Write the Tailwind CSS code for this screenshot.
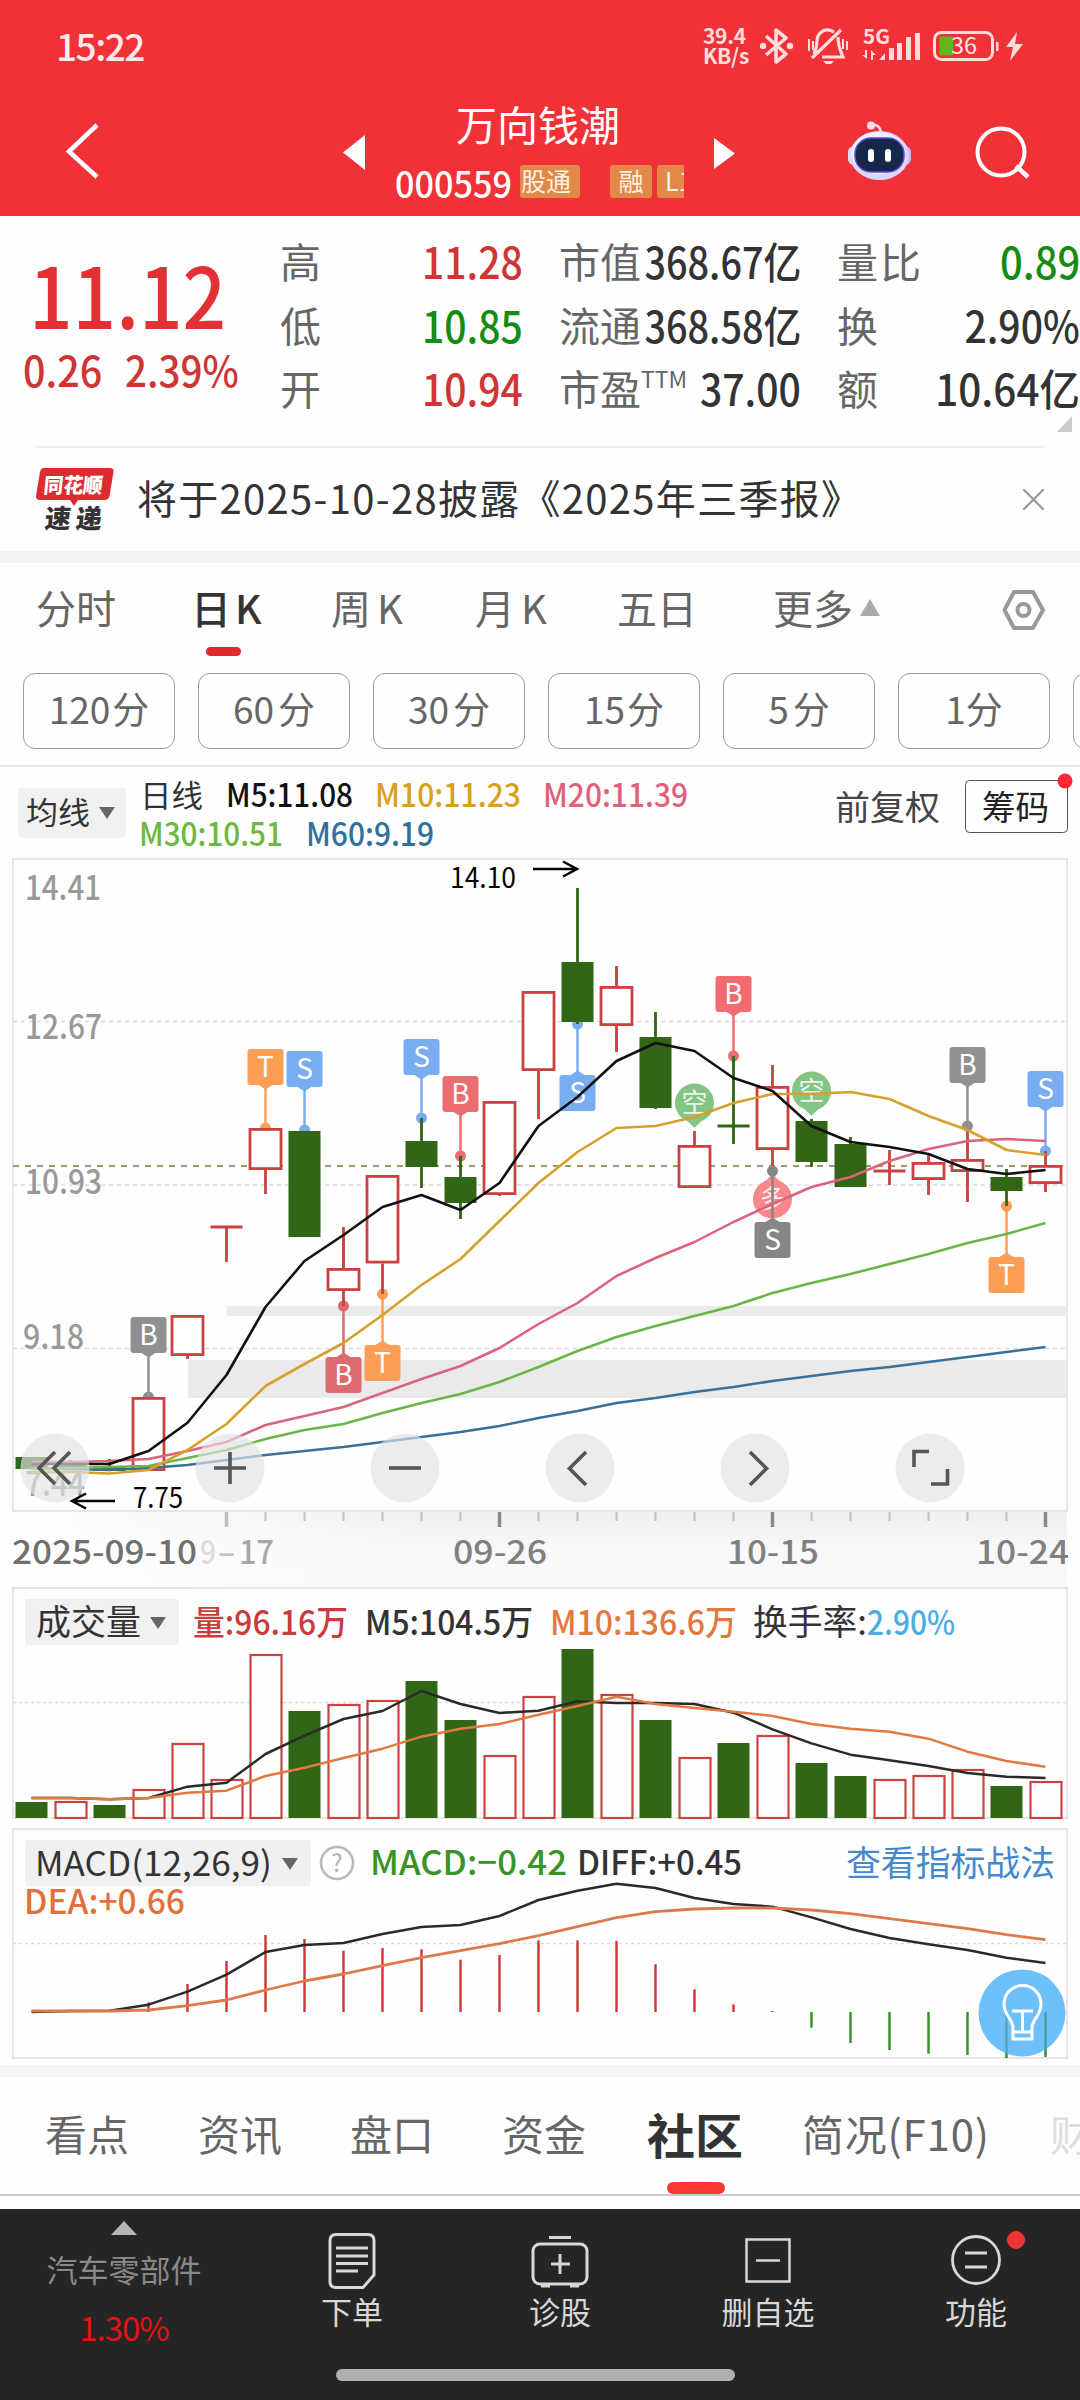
<!DOCTYPE html>
<html lang="zh-CN">
<head>
<meta charset="utf-8">
<title>万向钱潮 000559</title>
<script src="https://cdn.jsdelivr.net/npm/@tailwindcss/browser@4"></script>
</head>
<body class="w-[1080px] h-[2400px] overflow-hidden bg-[#fefefe] font-['Noto_Sans_CJK_SC',sans-serif] text-[#333] flex flex-col whitespace-nowrap">

<!-- Header -->
<header class="h-[216px] shrink-0 bg-[#f03238] text-white flex flex-col">
  <div class="h-[90px] flex items-center pl-[56px]">
    <span class="text-[37px] leading-[40px] font-medium tracking-[-1.5px] w-[647px] text-[#ffe9e9]">15:22</span>
    <div class="flex flex-col text-[21px] leading-[20px] font-bold tracking-[-0.3px] text-[#ffdcdc] w-[57px]"><span>39.4</span><span>KB/s</span></div>
    <svg class="w-[270px] h-[50px]" viewBox="760 20 270 50" fill="none" stroke="#ffdcdc" stroke-width="3.6">
      <path d="M766 36l20 18-10 8V30l10 8-20 17" stroke-linejoin="round"/>
      <circle cx="763" cy="46" r="3.2" fill="#ffdcdc" stroke="none"/><circle cx="790" cy="46" r="3.2" fill="#ffdcdc" stroke="none"/>
      <path d="M812 58L841 30M834 32c-11-6-17 3-17 9 0 7-1 9-3 13M838 37c0 9 2 13 5 20h-21" stroke-width="3.2"/>
      <path d="M823 61h11l-3 3h-5z" fill="#ffdcdc" stroke="none"/>
      <path d="M809 39v12M813 41v9M843 39v10M847 41v9" stroke-width="2"/>
      <g fill="#ffdcdc" stroke="none"><path d="M879 60l6-7v7zM889 48h5v12h-5zM897 43h5v17h-5zM906 37h5v23h-5zM915 33h5v27h-5z"/><path d="M867 50v9l-5-4h3v-5zM871 60V50l5 5h-3v5z"/></g>
      <text x="863" y="43.5" fill="#ffdcdc" stroke="none" font-size="20" font-weight="700" textLength="27" lengthAdjust="spacingAndGlyphs">5G</text>
      <rect x="934.5" y="32.500" width="58" height="27" rx="7" stroke-width="3"/>
      <path d="M941 36.500h12v19h-12a1.500 1.500 0 0 1-1.500-1.500V38a1.500 1.500 0 0 1 1.500-1.500z" fill="#62b51a" stroke="none"/>
      <path d="M996 42h2.500v9h-2.500z" fill="#ffdcdc" stroke="none"/>
      <text x="951" y="54" fill="#ffeaea" stroke="none" font-size="23" textLength="26" lengthAdjust="spacingAndGlyphs">36</text>
      <path d="M1017 32l-11 15h7l-3 14 13-17h-8z" fill="#ffdcdc" stroke="none"/>
    </svg>
  </div>
  <div class="h-[126px] flex">
    <svg class="w-[380px] h-[126px]" viewBox="0 90 380 126"><path d="M97 125L69 151.500 97 177" fill="none" stroke="#fff" stroke-width="4.500"/><path d="M343 152.500L365 135v35z" fill="#fff"/></svg>
    <div class="w-[320px] flex flex-col items-start">
      <div class="pl-[76px] pt-[9px] text-[41px] leading-[48px]">万向钱潮</div>
      <div class="flex items-center pl-[15px] w-[304px] overflow-hidden h-[74px]">
        <span class="text-[36px] leading-[40px] w-[125px] shrink-0"><span class="inline-block origin-left scale-x-[.95] font-medium">000559</span></span>
        <span class="bg-[#e28849] rounded-[3px] w-[60px] shrink-0 h-[33px] text-[25px] leading-[31px] pl-px text-[#fff1e0]">股通</span>
        <span class="bg-[#e28849] rounded-[3px] w-[42px] shrink-0 h-[33px] text-[25px] leading-[31px] ml-[30px] text-center text-[#fff1e0]">融</span>
        <span class="bg-[#e28849] rounded-l-[3px] w-[40px] h-[33px] text-[25px] leading-[31px] ml-[5px] pl-2 shrink-0 text-[#fff1e0]">L1</span>
      </div>
    </div>
    <svg class="w-[380px] h-[126px]" viewBox="700 90 380 126">
      <path d="M735 153.500L714 138v31z" fill="#fff"/>
      <circle cx="871" cy="125.500" r="4" fill="#ffd9e4"/><path d="M871 125c6-1 9 2 10 7" stroke="#ffd9e4" stroke-width="2.500" fill="none"/>
      <rect x="848" y="146" width="12" height="19" rx="6" fill="#e9ddf9"/><rect x="899" y="146" width="12" height="19" rx="6" fill="#c9b9ee"/>
      <ellipse cx="879.500" cy="155.500" rx="29.500" ry="24.500" fill="#dcd6fa"/><ellipse cx="878" cy="153" rx="27" ry="21" fill="#f1effd"/>
      <rect x="855" y="138" width="49" height="34" rx="16" fill="#17274a" stroke="#5a4bd0" stroke-width="1.500"/>
      <rect x="868" y="149" width="6" height="13" rx="3" fill="#fff"/><rect x="885" y="149" width="6" height="13" rx="3" fill="#fff"/>
      <circle cx="1001" cy="152" r="23.500" fill="none" stroke="#fff" stroke-width="4"/><path d="M1016 166l12 11" stroke="#fff" stroke-width="4.500"/>
    </svg>
  </div>
</header>

<!-- Quote -->
<section class="h-[230px] shrink-0 relative flex pt-[13px]">
  <div class="w-[281px] flex flex-col text-[#e23034]">
    <div class="pl-[29px] pt-[20px] text-[84px] leading-[88px]"><span class="inline-block origin-left scale-x-[.91] font-medium">11.12</span></div>
    <div class="flex text-[42px] leading-[48px] pt-[8px] pl-[23px] text-[#cf3535] font-medium"><span class="w-[102px]"><span class="inline-block origin-left scale-x-[.94]">0.26</span></span><span class="inline-block origin-left scale-x-[.92]">2.39%</span></div>
  </div>
  <div class="flex gap-[36px] text-[41px] leading-[63.5px] text-[#666]">
    <div class="w-[243px]">
      <div class="flex justify-between"><span>高</span><span class="text-[43px] origin-right scale-x-[.91] text-[#d03535] font-medium">11.28</span></div>
      <div class="flex justify-between"><span>低</span><span class="text-[43px] origin-right scale-x-[.91] text-[#148c14] font-medium">10.85</span></div>
      <div class="flex justify-between"><span>开</span><span class="text-[43px] origin-right scale-x-[.91] text-[#d03535] font-medium">10.94</span></div>
    </div>
    <div class="w-[242px] flex flex-col">
      <div class="flex justify-between"><span class="w-[88px]">市值</span><span class="w-[154px] flex justify-end"><span class="text-[43px] origin-right scale-x-[.88] text-[#333] font-medium">368.67亿</span></span></div>
      <div class="flex justify-between"><span class="w-[88px]">流通</span><span class="w-[154px] flex justify-end"><span class="text-[43px] origin-right scale-x-[.88] text-[#333] font-medium">368.58亿</span></span></div>
      <div class="flex justify-between"><span class="flex">市盈<span class="text-[23px] leading-[44px]">TTM</span></span><span class="text-[43px] origin-right scale-x-[.91] text-[#333] font-medium">37.00</span></div>
    </div>
    <div class="w-[243px]">
      <div class="flex justify-between"><span class="tracking-[2px]">量比</span><span class="text-[43px] origin-right scale-x-[.93] text-[#148c14] font-medium">0.89</span></div>
      <div class="flex justify-between"><span>换</span><span class="text-[43px] origin-right scale-x-[.91] text-[#333] font-medium">2.90%</span></div>
      <div class="flex justify-between"><span>额</span><span class="text-[43px] origin-right scale-x-[.94] text-[#333] font-medium">10.64亿</span></div>
    </div>
  </div>
  <svg class="absolute right-[8px] bottom-[14px] w-[15px] h-[16px]" viewBox="0 0 15 16"><path d="M15 0v16H0z" fill="#ccc"/></svg>
</section>

<!-- News -->
<section class="h-[105px] shrink-0 mx-[36px] border-t-2 border-[#f0f0f0] flex items-center">
  <svg class="w-[101px] h-[80px] shrink-0" viewBox="36 459 101 80">
    <path d="M44 467h66q4 0 3.500 4l-4 24q-1 4-5 4H78l-4 6-4-6H40q-4 0-4-4l4-24q1-4 4-4z" fill="#dc2c30"/>
    <text x="0" y="0" transform="translate(43 492) skewX(-6)" font-size="21" font-weight="900" fill="#fff" textLength="59" lengthAdjust="spacingAndGlyphs">同花顺</text>
    <text x="0" y="0" transform="translate(44 527) skewX(-6)" font-size="26" font-weight="900" fill="#333" textLength="57">速递</text>
  </svg>
  <span class="grow text-[40px] tracking-[1.3px] -mt-1.5">将于2025-10-28披露《2025年三季报》</span>
  <svg class="w-[21px] h-[21px]" viewBox="0 0 21 21"><path d="M0 0l21 21M21 0L0 21" stroke="#999" stroke-width="2.200"/></svg>
</section>
<div class="h-[12px] shrink-0 bg-[#f4f4f4]"></div>

<!-- Period tabs -->
<nav class="h-[110px] shrink-0 relative flex pl-[36px] pt-[14px] text-[40px] leading-[60px] text-[#666]">
  <span class="w-[155px]">分时</span><span class="w-[140px] text-[#333] font-medium">日<span class="ml-1">K</span></span><span class="w-[144px]">周<span class="ml-1.5">K</span></span><span class="w-[142px]">月<span class="ml-1.5">K</span></span><span class="w-[156px]">五日</span>
  <span class="flex items-center w-[229px] h-[60px] gap-[7px]">更多<svg class="w-[20px] h-[17px]" viewBox="0 0 20 17"><path d="M10 0l10 17H0z" fill="#aaa"/></svg></span>
  <svg class="w-[43px] h-[42px] mt-[12px]" viewBox="0 0 43 42" fill="none" stroke="#999" stroke-width="4"><path d="M12 3h19l10 18-10 18H12L2.500 21z" stroke-linejoin="round"/><circle cx="21.500" cy="21" r="6"/></svg>
  <i class="absolute left-[206px] top-[84px] w-[35px] h-[9px] rounded-full bg-[#e22a2e]"></i>
</nav>
<div class="h-[94px] shrink-0 flex gap-[23px] pl-[23px] overflow-hidden text-[37px] leading-[69px] text-center text-[#666] border-b-2 border-[#e8e8e8]">
  <span class="shrink-0 w-[152px] h-[76px] border border-[#999] rounded-[12px]">120<span class="ml-0.5">分</span></span>
  <span class="shrink-0 w-[152px] h-[76px] border border-[#999] rounded-[12px]">60<span class="ml-1">分</span></span>
  <span class="shrink-0 w-[152px] h-[76px] border border-[#999] rounded-[12px]">30<span class="ml-1">分</span></span>
  <span class="shrink-0 w-[152px] h-[76px] border border-[#999] rounded-[12px]">15<span class="ml-0.5">分</span></span>
  <span class="shrink-0 w-[152px] h-[76px] border border-[#999] rounded-[12px]">5<span class="ml-1">分</span></span>
  <span class="shrink-0 w-[152px] h-[76px] border border-[#999] rounded-[12px]">1分</span>
  <span class="shrink-0 w-[152px] h-[76px] border border-[#999] rounded-[12px]"></span>
</div>

<!-- Charts -->
<svg id="chart" class="shrink-0 w-[1080px] h-[1298px]" viewBox="0 767 1080 1298"></svg>
<div class="h-[12px] shrink-0 bg-[#f4f4f6]"></div>

<!-- Content tabs -->
<nav class="h-[119px] shrink-0 relative flex pl-[45px] text-[42px] leading-[112px] text-[#666] border-b-2 border-[#ccc] overflow-hidden">
  <span class="shrink-0 w-[153px]">看点</span><span class="shrink-0 w-[152px]">资讯</span><span class="shrink-0 w-[152px]">盘口</span><span class="shrink-0 w-[145px]">资金</span><span class="shrink-0 w-[155px] text-[48px] font-bold text-[#333]">社区</span><span class="shrink-0 w-[248px] tracking-[0.8px]">简况(F10)</span><span class="shrink-0 w-[30px] overflow-hidden text-[#ddd]">财</span>
  <i class="absolute left-[667px] bottom-0 w-[58px] h-[12px] rounded-full bg-[#fa3a32]"></i>
</nav>
<div class="h-[13px] shrink-0"></div>

<!-- Bottom bar -->
<footer class="h-[191px] shrink-0 bg-[#252525] text-[#d8d8d8] relative flex text-[31px] leading-[40px]">
  <div class="w-[248px] flex flex-col items-center pt-[12px]">
    <svg class="w-[26px] h-[14px]" viewBox="0 0 26 14"><path d="M13 0l13 14H0z" fill="#b5b5b5"/></svg>
    <span class="text-[#8a8a8a] mt-[12px] leading-[44px]">汽车零部件</span>
    <span class="text-[#e81010] mt-[16px] text-[33px] tracking-[-1px]">1.30%</span>
  </div>
  <div class="w-[208px] flex flex-col items-center pt-[23px]">
    <svg class="w-[50px] h-[58px]" viewBox="0 0 50 58" fill="none" stroke="#d8d8d8" stroke-width="3"><path d="M9 2.500h32q6 0 6 6V43L36 55.500H9q-6 0-6-6v-41q0-6 6-6z"/><path d="M9 16h32M9 24h32M9 31.500h32M9 39h22"/></svg>
    <span class="mt-px">下单</span>
  </div>
  <div class="w-[208px] flex flex-col items-center pt-[23px]">
    <svg class="w-[58px] h-[58px]" viewBox="0 0 58 58" fill="none" stroke="#d8d8d8" stroke-width="3"><rect x="2" y="12" width="54" height="40" rx="7"/><path d="M18 5.500h22M29 22v20M20 32h19M10 54h9M39 54h9" /></svg>
    <span class="mt-px">诊股</span>
  </div>
  <div class="w-[208px] flex flex-col items-center pt-[23px]">
    <svg class="w-[50px] h-[58px]" viewBox="0 0 50 58" fill="none" stroke="#d8d8d8" stroke-width="2.500"><rect x="3.500" y="7.500" width="43" height="42"/><path d="M13 28.500h24"/></svg>
    <span class="mt-px">删自选</span>
  </div>
  <div class="w-[208px] flex flex-col items-center pt-[23px] relative">
    <svg class="w-[58px] h-[58px]" viewBox="0 0 58 58" fill="none" stroke="#d8d8d8" stroke-width="2.800"><circle cx="29" cy="28" r="23.500"/><path d="M18 21h22M18 35h22"/></svg>
    <span class="mt-px">功能</span>
    <i class="absolute left-[135px] top-[22px] w-[18px] h-[18px] rounded-full bg-[#ee3434]"></i>
  </div>
  <i class="absolute left-[336px] top-[160px] w-[399px] h-[12px] rounded-full bg-[#b0b0b0]"></i>
</footer>

<script>
const out = [];
const RED = '#c94141', GREEN = '#306615';
const cx = i => 31.5 + 39 * i;
const add = s => out.push(s);
const line = (x1, y1, x2, y2, c, w = 2, extra = '') => add(`<line x1="${x1}" y1="${y1}" x2="${x2}" y2="${y2}" stroke="${c}" stroke-width="${w}" ${extra}/>`);
const rect = (x, y, w, h, fill, extra = '') => add(`<rect x="${x}" y="${y}" width="${w}" height="${h}" fill="${fill}" ${extra}/>`);
// text drawn from x1 to x2 on baseline y
const text = (s, x1, x2, y, size, c, wt = 400, extra = '') => add(`<text x="${x1}" y="${y}" font-size="${size}" fill="${c}" font-weight="${wt}" textLength="${x2 - x1}" lengthAdjust="spacingAndGlyphs" ${extra}>${s}</text>`);
const poly = (start, ys, c, w, base = 0, k = 1) => add(`<polyline fill="none" stroke="${c}" stroke-width="${w}" stroke-linejoin="round" points="${ys.map((y, i) => cx(i + start) + ',' + (base + y * k)).join(' ')}"/>`);
const tri = (x, y) => add(`<path d="M${x} ${y}h16l-8 12z" fill="#666"/>`);

// moving-average legend
rect(18, 788, 108, 50, '#f1f1f1', 'rx="4"');
text('均线', 26, 90, 824, 31, '#333'); tri(99, 807);
text('日线', 140, 203, 807, 31, '#333');
text('M5:11.08', 226, 353, 807, 32, '#111', 500);
text('M10:11.23', 375, 521, 807, 32, '#d9a020', 500);
text('M20:11.39', 543, 688, 807, 32, '#e0617a', 500);
text('M30:10.51', 139, 283, 846, 32, '#6cb840', 500);
text('M60:9.19', 306, 434, 846, 32, '#32709c', 500);
text('前复权', 835, 940, 820, 34, '#444');
rect(965.5, 780.5, 102, 52, 'none', 'rx="4" stroke="#555"');
text('筹码', 982, 1049, 820, 34, '#222');
add('<circle cx="1065" cy="781" r="7.500" fill="#ff2733"/>');

// price panel
add('<defs><linearGradient id="axis" x1="0" y1="0" x2="0" y2="1"><stop offset="0" stop-color="#f0f0f0"/><stop offset=".5" stop-color="#f8f8f9"/><stop offset="1" stop-color="#fafafc"/></linearGradient><linearGradient id="fade"><stop offset="0" stop-color="#fff"/><stop offset="1" stop-color="#fff" stop-opacity="0"/></linearGradient></defs>');
rect(13, 1512, 1054, 76, 'url(#axis)'); rect(13, 1512, 420, 75, 'url(#fade)');
rect(13, 859, 1054, 652, 'none', 'stroke="#e6e6e6" stroke-width="2"');
rect(226.5, 1306, 841, 10, '#ebebeb');
rect(188, 1360, 879, 38, '#ebeaeb');
for (const y of [1021.500, 1185, 1348.500]) line(13, y, 1067, y, '#dcdcdc', 1.5, 'stroke-dasharray="4 4"');
line(13, 1166, 1067, 1166, '#a09a5c', 2, 'stroke-dasharray="6 6"');
text('14.41', 25, 101, 900, 34, '#999', 500);
text('12.67', 25, 102, 1039, 34, '#999', 500);
text('10.93', 25, 102, 1194, 34, '#999', 500);
text('9.18', 23, 84, 1349, 34, '#999', 500);
text('7.44', 25, 85, 1496, 34, '#999', 500);

// signal markers: [index, letter, colour, dot y, box top]
const marks = [
  [6, 'T', '#fc9f55', 1128, 1049], [7, 'S', '#78adf2', 1130, 1051], [10, 'S', '#78adf2', 1118, 1039], [11, 'B', '#ec6d70', 1156, 1076],
  [14, 'S', '#78adf2', 1024, 1075], [18, 'B', '#f26b70', 1056, 976], [24, 'B', '#909090', 1126, 1047],
  [26, 'S', '#78adf2', 1151, 1071], [25, 'T', '#fc9f55', 1206, 1257], [3, 'B', '#909090', 1397, 1317], [8, 'B', '#dd6a6e', 1306, 1357], [9, 'T', '#fc9f55', 1294, 1345]];
const pin = (i, y, tip, ch, c) => {
  const d = tip > y ? 1 : -1;
  add(`<circle cx="${cx(i)}" cy="${y}" r="19.500" fill="${c}"/><path d="M${cx(i) - 9} ${y + 16 * d}h18L${cx(i)} ${tip}z" fill="${c}"/>`);
  add(`<text x="${cx(i)}" y="${y + 9}" font-size="26" fill="#fff" fill-opacity=".85" text-anchor="middle">${ch}</text>`);
};
const mark = ([i, ch, c, dot, top]) => {
  const x = cx(i), above = top < dot;
  line(x, dot, x, above ? top + 38 : top - 3, c, 2.5);
  add(`<circle cx="${x}" cy="${dot}" r="5.500" fill="${c}"/>`);
  rect(x - 18, top, 36, 36, c, 'rx="3"');
  add(above ? `<path d="M${x - 7} ${top + 36}h14l-7 4.500z" fill="${c}"/>` : `<path d="M${x - 7} ${top}h14l-7-4.500z" fill="${c}"/>`);
  add(`<text x="${x}" y="${top + 28}" font-size="28" fill="#fff" text-anchor="middle">${ch}</text>`);
};

// candles: [index, up?, high, bodyTop, bodyBottom, low]
const candles = [[0,0,1457,1457,1469,1469],[1,0,1460,1462,1467,1469],[2,0,1459,1466,1471,1471],[3,1,1397,1397,1471,1471],[4,1,1315,1315,1356,1359],[5,1,1227,1227,1227,1262],[6,1,1128,1128,1170,1194],[7,0,1131,1131,1237,1237],[8,1,1227,1268,1291,1306],[9,1,1175,1175,1263.5,1294],[10,0,1118,1141,1167,1188],[11,0,1156,1177,1203,1219],[12,1,1101,1101,1195,1196],[13,1,991,991,1071,1119],[14,0,888,962,1022,1024],[15,1,966,986,1026,1052],[16,0,1012,1037,1108,1109],[17,1,1131,1145,1188,1188],[18,0,1056,1126,1126,1144],[19,1,1065,1086,1150,1171],[20,0,1119,1121,1162,1167],[21,0,1137,1144,1187,1187],[22,1,1150,1171,1171,1185],[23,1,1155,1162,1180,1195],[24,1,1130,1159,1172,1202],[25,0,1169,1177,1191,1206],[26,1,1151,1165,1184,1192]];
marks.forEach(mark);
for (const [i, up, hi, t, b, lo] of candles) {
  const x = cx(i), c = up ? RED : GREEN;
  if (hi < t) line(x, hi, x, t, c, 2.800);
  if (lo > b) line(x, b, x, lo, c, 2.800);
  if (t === b) line(x - 16, t, x + 16, t, c, 2.800);
  else if (up) rect(x - 15.500, t + 1.400, 31, b - t - 2.800, '#fff', `stroke="${c}" stroke-width="2.800"`);
  else rect(x - 16, t, 32, b - t, c);
}
pin(17, 1103, 1128, '空', '#84c583');
pin(20, 1091, 1116, '空', '#84c583');
pin(19, 1199, 1174, '多', '#f8888c');
mark([19, 'S', '#868686', 1171, 1222]);

poly(0, [1468,1469,1470,1468,1465,1460,1455,1451,1447,1442,1437,1432,1426,1418,1411,1403,1398,1392,1387,1381,1376,1371,1367,1362,1357,1352,1347], '#39709a', 2.500);
poly(0, [1469,1468,1467,1466,1458,1450,1439,1430,1424,1413,1403,1394,1382,1367,1351,1337,1326,1316,1306,1293,1283,1274,1264,1254,1243,1234,1223], '#6bb546', 2.500);
poly(0, [1462,1462,1461,1459,1451,1442,1425,1416,1407,1393,1379,1366,1348,1324,1303,1276,1258,1242,1222,1204,1187,1177,1161,1149,1141,1139,1141], '#d9647b', 2.500);
poly(0, [1472,1472,1473.500,1470,1450,1424,1386,1364,1343,1315,1285,1259,1221,1183,1152,1128,1126,1117,1103,1094,1094,1092,1099,1116,1130,1150,1155], '#d6a02c', 2.600);
poly(0, [1464,1464,1464,1451,1422.7,1375,1307,1261,1235,1207,1195,1210,1183,1126,1097,1061,1043,1051,1078,1091,1126,1142,1147,1154,1169,1174,1170], '#111', 2.600);

text('14.10', 450, 516, 888, 28, '#000');
add('<path d="M533 869h43M563 861.500l14 7.500-14 7.500" fill="none" stroke="#000" stroke-width="2.500"/>');
text('7.75', 133, 183, 1508, 28, '#000');
add('<path d="M115 1501H72M86 1493.500l-14 7.500 14 7.500" fill="none" stroke="#000" stroke-width="2.500"/>');

// floating chart controls
const icons = [
  'M55 1452l-16 16 16 16M70 1452l-16 16 16 16', 'M214 1468h32M230 1452v32', 'M389 1468h32', 'M586 1452l-16.500 16.500 16.500 16.500', 'M750 1452l16.500 16.500-16.500 16.500', 'M914 1467v-15.500h15M931 1484h16.500v-15'];
[55, 230, 405, 580, 755, 930].forEach((x, i) => {
  add(`<circle cx="${x}" cy="1468" r="34.500" fill="#e2e2e4" fill-opacity=".66"/>`);
  add(`<path d="${icons[i]}" fill="none" stroke="#555" stroke-width="3.600"/>`);
});

// date axis
for (let i = 5; i < 27; i++) {
  const major = [5, 12, 19, 26].includes(i);
  line(cx(i), 1512, cx(i), major ? 1527 : 1521, major && i > 5 ? '#888' : '#c0c0c0', major ? 3.5 : 2);
}
text('2025-09-10', 12, 197, 1564, 33, '#707070', 500);
text('9', 200, 216, 1564, 33, '#ddd', 500);
text('-', 217, 236, 1564, 33, '#c4c4c4', 500);
text('17', 239, 274, 1564, 33, '#a8a8a8', 500);
text('09-26', 453, 547, 1564, 33, '#808080', 500);
text('10-15', 727, 819, 1564, 33, '#808080', 500);
text('10-24', 976, 1069, 1564, 33, '#808080', 500);

// volume panel
rect(13, 1588, 1054, 230, '#fefefe', 'stroke="#e6e6e6" stroke-width="2"');
line(13, 1702.500, 1067, 1702.500, '#dcdcdc', 1.5, 'stroke-dasharray="3 3"');
const V = [[0,1802],[1,1801],[0,1805],[1,1789],[1,1743],[1,1779],[1,1654],[0,1711],[1,1704],[1,1700],[0,1681],[0,1720],[1,1755],[1,1696],[0,1649],[1,1694],[0,1720],[1,1757],[0,1743],[1,1735],[0,1763],[0,1776],[1,1779],[1,1775],[1,1769],[0,1786],[1,1781]];
V.forEach(([up, y], i) => up ? rect(cx(i) - 15, y + 1, 31, 1817 - y, '#fefefe', `stroke="${RED}" stroke-width="2.200"`) : rect(cx(i) - 16, y, 32, 1818 - y, GREEN));
poly(0, [654,654,658,654,620,608,522,467,417,393,333,372,399,392,364,369,369,372,398,448,490,524,541,558,579,590,594], '#2a2a2a', 2.500, 1580, 1 / 3);
poly(0, [654,654,658,654,638,632,588,563,534,506,470,446,432,404,378,350,372,384,395,408,432,446,455,476,515,543,560], '#e2793f', 2.500, 1580, 1 / 3);
rect(25, 1599, 154, 46, '#f1f1f3', 'rx="3"');
text('成交量', 36, 141, 1635, 35, '#333'); tri(150, 1617);
text('量:96.16万', 193, 348, 1635, 34, '#cb3a3c', 500);
text('M5:104.5万', 365, 533, 1635, 34, '#333', 500);
text('M10:136.6万', 550, 737, 1635, 34, '#e27840', 500);
text('换手率:', 753, 867, 1635, 35, '#333');
text('2.90%', 867, 955, 1635, 34, '#4bacdf', 500);

// MACD panel
rect(13, 1829, 1054, 229, '#fefefe', 'stroke="#e6e6e6" stroke-width="2"');
line(13, 1943.500, 1067, 1943.500, '#dcdcdc', 1.5, 'stroke-dasharray="3 3"');
const M = [0,0,0,547,492,423,345,357,392,384,388,419,405,361,361,363,433,508,553,573,623,669,690,701,705,714,711];
M.forEach((v, i) => { if (v) line(cx(i), 2012, cx(i), 1820 + v / 3, v > 576 ? '#2f8f22' : '#cf3434', 2.400); });
rect(25, 1840, 286, 46, '#f0f0f0', 'rx="3"');
text('MACD(12,26,9)', 35, 272, 1876, 34, '#333'); tri(282, 1858);
add('<circle cx="337" cy="1863" r="16" fill="none" stroke="#b8b8b8" stroke-width="2.500"/><text x="337" y="1872" font-size="24" fill="#b0b0b0" text-anchor="middle">?</text>');
text('MACD:−0.42', 370, 567, 1875, 34, '#389428', 500);
text('DIFF:+0.45', 577, 742, 1875, 34, '#333', 500);
text('查看指标战法', 846, 1055, 1876, 35, '#4489cd');
text('DEA:+0.66', 24, 185, 1914, 34, '#e2703a', 500);
poly(0, [576,573,572,554,515,464,396,375,369,342,321,315,288,240,212,191,204,234,252,260,292,327,354,373,390,413,429], '#2a2a2a', 2.500, 1820, 1 / 3);
poly(0, [573,573,573,570,557,540,510,483,462,437,413,392,371,347,320,293,275,267,264,264,270,281,296,311,326,344,359], '#dd7a4c', 2.800, 1820, 1 / 3);
add('<circle cx="1022" cy="2013" r="43.500" fill="#66bdfa" fill-opacity=".95"/>');
line(1006.5, 2014, 1006.5, 2056, '#3a8e70', 2, 'opacity=".5"'); line(1045.5, 2012, 1045.5, 2056, '#3a8e70', 2, 'opacity=".7"');
add('<path d="M1013 2028c0-9-9-12-9-24a18.500 18.500 0 0 1 37 0c0 12-9 15-9 24v11h-19zM1013 2032h19M1012 2011h21M1022.500 2011v20" fill="none" stroke="#fff" stroke-width="3" stroke-linejoin="round"/>');

document.getElementById('chart').innerHTML = out.join('');
</script>
</body>
</html>
